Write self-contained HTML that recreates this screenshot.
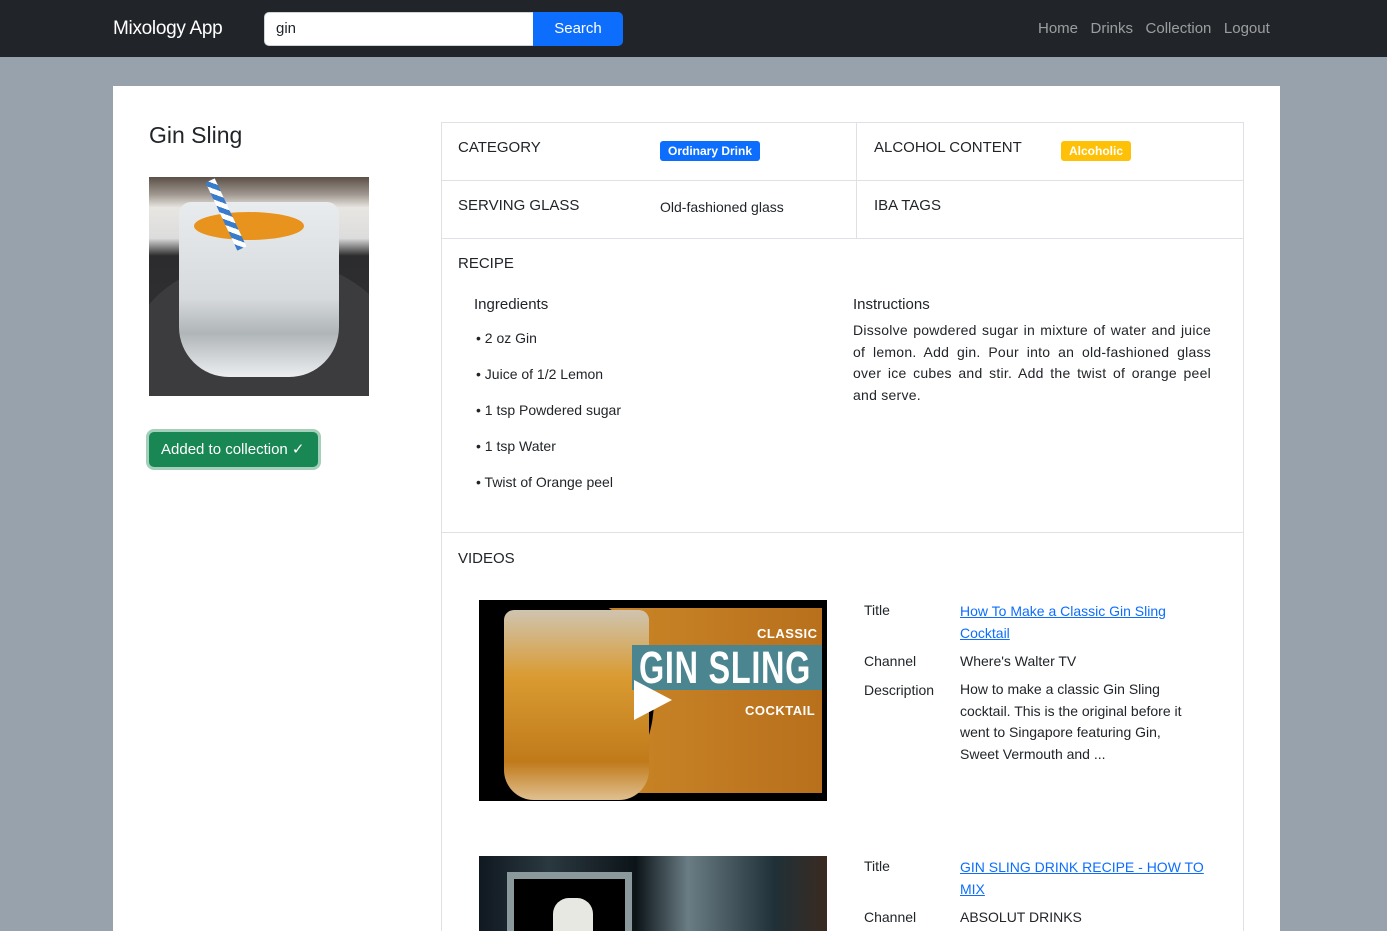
<!DOCTYPE html>
<html style="width:1387px;height:931px;overflow:hidden"><head><meta charset="utf-8">
<style>
*{box-sizing:border-box;margin:0;padding:0}
body{width:1387px;height:931px;overflow:hidden;background:#98a2ac;font-family:"Liberation Sans",Arial,sans-serif;color:#212529;position:relative;font-size:14px}
.a{position:absolute}
.nav{left:0;top:0;width:1387px;height:57px;background:#212529}
.card{left:113px;top:86px;width:1167px;height:845px;background:#fff}
.t{font-size:15px;color:#212529;white-space:nowrap}
.ln{background:#dee2e6}
a{color:#0d6efd;text-decoration:underline}
</style></head><body>
<div class="a nav"></div>
<div class="a" style="left:113px;top:18px;color:#fff;font-size:19px;letter-spacing:-0.3px">Mixology App</div>
<div class="a" style="left:264px;top:12px;width:270px;height:34px;background:#fff;border:1px solid #ced4da;border-radius:5px 0 0 5px"></div>
<div class="a" style="left:276px;top:20px;font-size:15px">gin</div>
<div class="a" style="left:533px;top:12px;width:90px;height:34px;background:#0d6efd;border-radius:0 5px 5px 0;color:#fff;font-size:15px;text-align:center;line-height:34px">Search</div>
<div class="a" style="left:1038px;top:20px;color:rgba(255,255,255,.55);font-size:15px">Home&nbsp;&nbsp;&nbsp;Drinks&nbsp;&nbsp;&nbsp;Collection&nbsp;&nbsp;&nbsp;Logout</div>

<div class="a card"></div>
<div class="a" style="left:149px;top:122px;font-size:23px">Gin Sling</div>
<div class="a" style="left:149px;top:177px;width:220px;height:219px;background:linear-gradient(180deg,#5a5048 0%,#a09890 8%,#e8e6e2 14%,#dcdcdc 28%,#2c2c2e 36%,#333335 100%);overflow:hidden">
 <div class="a" style="left:-20px;top:80px;width:270px;height:200px;border-radius:50%;background:#3c3c3e"></div>
 <div class="a" style="left:30px;top:25px;width:160px;height:175px;border-radius:12px 12px 50px 50px;background:linear-gradient(180deg,#e9ecee,#d6dadc 55%,#b0b5b8 75%,#eceef0)"></div>
 <div class="a" style="left:45px;top:35px;width:110px;height:28px;border-radius:50%;background:#e8931e"></div>
 <div class="a" style="left:72px;top:0;width:10px;height:75px;background:repeating-linear-gradient(45deg,#3a7ccc 0 5px,#fff 5px 10px);transform:rotate(-25deg)"></div>
</div>
<div class="a" style="left:146px;top:429px;width:175px;height:41px;border-radius:8px;background:#a3cfbb"></div>
<div class="a" style="left:149px;top:432px;width:169px;height:35px;border-radius:5px;background:#198754;color:#fff;font-size:15px;line-height:35px;padding-left:12px;white-space:nowrap">Added to collection ✓</div>

<div class="a" style="left:441px;top:122px;width:803px;height:820px;border:1px solid #dee2e6"></div>
<div class="a ln" style="left:441px;top:180px;width:803px;height:1px"></div>
<div class="a ln" style="left:441px;top:238px;width:803px;height:1px"></div>
<div class="a ln" style="left:441px;top:532px;width:803px;height:1px"></div>
<div class="a ln" style="left:856px;top:122px;width:1px;height:116px"></div>
<div class="a t" style="left:458px;top:139px">CATEGORY</div>
<div class="a" style="left:660px;top:141px;height:20px;padding:0 8px;background:#0d6efd;color:#fff;font-size:12px;font-weight:bold;line-height:20px;border-radius:3px">Ordinary Drink</div>
<div class="a t" style="left:874px;top:139px">ALCOHOL CONTENT</div>
<div class="a" style="left:1061px;top:141px;height:20px;padding:0 8px;background:#ffc107;color:#fff;font-size:12px;font-weight:bold;line-height:20px;border-radius:3px">Alcoholic</div>
<div class="a t" style="left:458px;top:197px">SERVING GLASS</div>
<div class="a t" style="left:660px;top:199px;font-size:14px">Old-fashioned glass</div>
<div class="a t" style="left:874px;top:197px">IBA TAGS</div>
<div class="a t" style="left:458px;top:255px">RECIPE</div>
<div class="a t" style="left:474px;top:296px">Ingredients</div>
<div class="a t" style="left:476px;top:320px;font-size:14px;line-height:36px">• 2 oz Gin<br>• Juice of 1/2 Lemon<br>• 1 tsp Powdered sugar<br>• 1 tsp Water<br>• Twist of Orange peel</div>
<div class="a t" style="left:853px;top:296px">Instructions</div>
<div class="a" style="left:853px;top:320px;width:358px;font-size:14px;line-height:21.7px;text-align:justify;letter-spacing:0.25px">Dissolve powdered sugar in mixture of water and juice of lemon. Add gin. Pour into an old-fashioned glass over ice cubes and stir. Add the twist of orange peel and serve.</div>
<div class="a t" style="left:458px;top:550px">VIDEOS</div>

<div class="a" style="left:479px;top:600px;width:348px;height:201px;background:#000;overflow:hidden">
 <div class="a" style="left:5px;top:8px;width:338px;height:185px;background:linear-gradient(90deg,#2a2a2a,#c98426 40%,#b8701c 100%)"></div>
 <div class="a" style="left:0;top:-5px;width:175px;height:210px;border-radius:0 50% 50% 0;background:#000"></div>
 <div class="a" style="left:25px;top:10px;width:145px;height:190px;border-radius:10px 10px 30px 30px;background:linear-gradient(180deg,#cfc4b0,#d99b32 35%,#c07a1a 80%,#e0c090)"></div>
 <div class="a" style="left:278px;top:26px;color:#fff;font-weight:bold;font-size:13px;letter-spacing:0.5px">CLASSIC</div>
 <div class="a" style="left:153px;top:45px;width:190px;height:45px;background:#4a8590"></div>
 <div class="a" style="left:160px;top:42px;color:#fff;font-weight:bold;font-size:45px;transform:scaleX(0.72);transform-origin:left top;letter-spacing:1px;white-space:nowrap">GIN SLING</div>
 <div class="a" style="left:266px;top:103px;color:#fff;font-weight:bold;font-size:13px;letter-spacing:0.5px">COCKTAIL</div>
 <div class="a" style="left:155px;top:80px;width:0;height:0;border-left:38px solid #fff;border-top:20px solid transparent;border-bottom:20px solid transparent"></div>
</div>
<div class="a t" style="left:864px;top:602px;font-size:14px">Title</div>
<div class="a" style="left:960px;top:600px;width:240px;font-size:14px;line-height:22px"><a>How To Make a Classic Gin Sling Cocktail</a></div>
<div class="a t" style="left:864px;top:653px;font-size:14px">Channel</div>
<div class="a t" style="left:960px;top:653px;font-size:14px">Where's Walter TV</div>
<div class="a t" style="left:864px;top:682px;font-size:14px">Description</div>
<div class="a" style="left:960px;top:679px;width:240px;font-size:14px;line-height:21.5px">How to make a classic Gin Sling cocktail. This is the original before it went to Singapore featuring Gin, Sweet Vermouth and ...</div>

<div class="a" style="left:479px;top:856px;width:348px;height:75px;background:linear-gradient(90deg,#101820,#2a3840 20%,#0c1418 45%,#6a7c84 60%,#203038 85%,#3a2a20);overflow:hidden">
 <div class="a" style="left:28px;top:16px;width:125px;height:70px;background:#000;border:7px solid #8a9a9c"></div>
 <div class="a" style="left:74px;top:42px;width:40px;height:40px;border-radius:40% 40% 0 0;background:#e8e8e2"></div>
</div>
<div class="a t" style="left:864px;top:858px;font-size:14px">Title</div>
<div class="a" style="left:960px;top:856px;width:250px;font-size:14px;line-height:22px"><a>GIN SLING DRINK RECIPE - HOW TO MIX</a></div>
<div class="a t" style="left:864px;top:909px;font-size:14px">Channel</div>
<div class="a t" style="left:960px;top:909px;font-size:14px">ABSOLUT DRINKS</div>
</body></html>
